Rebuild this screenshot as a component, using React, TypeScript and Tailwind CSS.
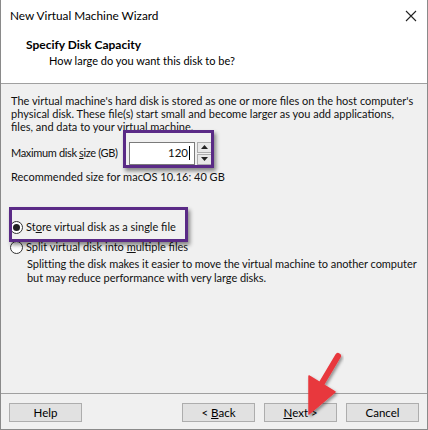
import React from "react";

function Radio({ checked }: { checked: boolean }) {
  return (
    <span className="flex h-[13px] w-[13px] shrink-0 items-center justify-center rounded-full border border-[#333] bg-white">
      {checked && <span className="h-[7px] w-[7px] rounded-full bg-[#222]" />}
    </span>
  );
}

function Btn({ children }: { children: React.ReactNode }) {
  return (
    <div className="flex h-[19px] w-[73px] items-center justify-center whitespace-pre border border-[#adadad] bg-[#e1e1e1] text-[11.5px] leading-none text-black">
      {children}
    </div>
  );
}

export default function App() {
  return (
    <div
      className="relative h-[430px] w-[428px] overflow-hidden border-x border-b border-[#8a8a8a] bg-[#f0f0f0] text-[11px] leading-[14px] text-[#111]"
      style={{ fontFamily: 'Lato, "Segoe UI", sans-serif' }}
    >
      {/* title bar + header */}
      <div className="bg-white">
        <div className="flex h-[31px] items-center justify-between pl-[9px] pr-[9px]">
          <span className="text-[11.8px] leading-none text-black">New Virtual Machine Wizard</span>
          <svg width="12" height="12" viewBox="0 0 12 12" className="mr-[1px]">
            <path d="M1 1 L11 11 M11 1 L1 11" stroke="#222" strokeWidth="1.1" fill="none" />
          </svg>
        </div>
        <div className="h-[52px] pl-[25px] pt-[6px]">
          <div className="text-[12px] font-bold leading-[16px] text-black">Specify Disk Capacity</div>
          <div className="pl-[23px] text-[11px] leading-[16px] text-black">How large do you want this disk to be?</div>
        </div>
      </div>
      <div className="h-px bg-[#a0a0a0]" />

      {/* body */}
      <div className="h-[309px] px-[10px] pt-[10px]">
        <p className="w-[404px] leading-[13px]">
          The virtual machine's hard disk is stored as one or more files on the host computer's physical disk. These file(s) start small and become larger as you add applications, files, and data to your virtual machine.
        </p>
        <div className="mt-[8px] flex h-[24px] items-center">
          <span className="w-[118px] whitespace-nowrap tracking-[-0.35px]">
            Maximum disk <span className="underline">s</span>ize (GB)
          </span>
          <div className="flex h-[23px] w-[66px] items-center justify-end border border-[#7a7a7a] bg-white pr-[4px] text-[11.5px]">
            120<span className="ml-px h-[14px] w-px bg-black" />
          </div>
          <div className="ml-[2px] flex h-[23px] w-[15px] flex-col gap-px">
            <div className="flex flex-1 items-center justify-center border border-[#adadad] bg-[#e8e8e8]">
              <svg width="7" height="4" viewBox="0 0 7 4"><path d="M0 4 L3.5 0 L7 4 Z" fill="#222" /></svg>
            </div>
            <div className="flex flex-1 items-center justify-center border border-[#adadad] bg-[#e8e8e8]">
              <svg width="7" height="4" viewBox="0 0 7 4"><path d="M0 0 L3.5 4 L7 0 Z" fill="#222" /></svg>
            </div>
          </div>
        </div>
        <div className="mt-[5px]">Recommended size for macOS 10.16: 40 GB</div>

        <div className="mt-[36px] flex items-center gap-[3px]">
          <span className="-ml-[1px] flex"><Radio checked /></span>
          <span>
            St<span className="underline">o</span>re virtual disk as a single file
          </span>
        </div>
        <div className="mt-[6px] flex items-center gap-[3px]">
          <span className="-ml-[1px] flex"><Radio checked={false} /></span>
          <span>
            Split virtual disk into <span className="underline">m</span>ultiple files
          </span>
        </div>
        <p className="mt-[3px] w-[414px] pl-[16px] tracking-[-0.05px]">
          Splitting the disk makes it easier to move the virtual machine to another computer but may reduce performance with very large disks.
        </p>
      </div>

      <div className="h-px bg-[#a0a0a0]" />
      <div className="flex h-[35px] items-start pt-[9px] pl-[8px] pr-[8px]">
        <Btn>Help</Btn>
        <div className="flex-1" />
        <div className="flex gap-[9px]">
          <Btn>
            {"< "}<span className="underline">B</span>{"ack"}
          </Btn>
          <Btn>
            <span className="underline">N</span>{"ext >"}
          </Btn>
          <Btn>Cancel</Btn>
        </div>
      </div>

      {/* highlight rectangles (overlay) */}
      <div className="pointer-events-none absolute left-[122px] top-[130px] h-[38px] w-[91px] border-[3px] border-[#5a2a86] shadow-[2px_3px_4px_rgba(0,0,0,0.45)]" />
      <div className="pointer-events-none absolute left-[8px] top-[207px] h-[35px] w-[179px] border-[3px] border-[#5a2a86] shadow-[2px_3px_4px_rgba(0,0,0,0.45)]" />

      {/* red arrow overlay */}
      <svg className="pointer-events-none absolute left-0 top-0" width="428" height="430" viewBox="0 0 428 430">
        <defs>
          <filter id="sh" x="-20%" y="-20%" width="140%" height="140%">
            <feDropShadow dx="1.5" dy="2" stdDeviation="1.5" floodColor="#000" floodOpacity="0.4" />
          </filter>
        </defs>
        <g filter="url(#sh)">
          <path d="M337 356 L318 388" stroke="#e8383d" strokeWidth="6" strokeLinecap="round" fill="none" />
          <path d="M308 376 L334 392 L308 414 Z" fill="#e8383d" strokeLinejoin="round" stroke="#e8383d" strokeWidth="1.5" />
        </g>
      </svg>
    </div>
  );
}
